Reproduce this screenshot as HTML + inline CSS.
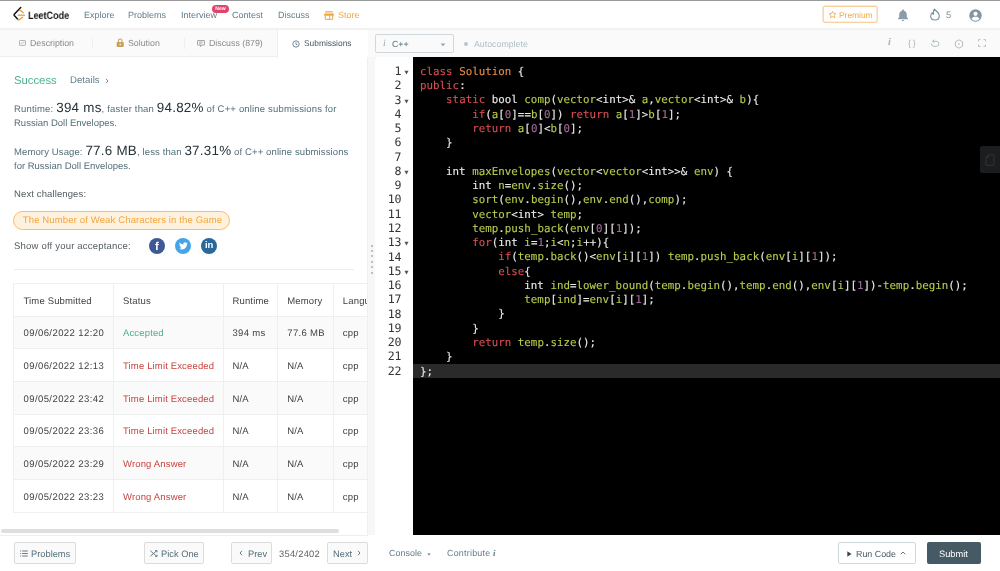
<!DOCTYPE html>
<html lang="en">
<head>
<meta charset="utf-8">
<title>Russian Doll Envelopes - LeetCode</title>
<style>
*{box-sizing:border-box;margin:0;padding:0}
html,body{width:1000px;height:571px;overflow:hidden;background:#fff}
body{position:relative;font-family:"Liberation Sans",sans-serif;font-size:9.3px;color:#424242;-webkit-font-smoothing:antialiased;text-rendering:geometricPrecision}
.abs{position:absolute;white-space:nowrap;will-change:transform}
#topline{left:0;top:0;width:1000px;height:1.200px;background:#999}
#header{left:0;top:1px;width:1000px;height:28px;background:#fff}
#hline{left:0;top:28px;width:1000px;height:1px;background:#e6e6e6;transform:translateY(0.500px);z-index:5}
.nav{top:9px;font-size:9px;color:#607d8b;line-height:12px}
#tabs{left:0;top:29px;width:367.500px;height:28px;background:#fafafa;border-bottom:1px solid #eeeeee}
.tab{top:37.200px;font-size:8.800px;color:#8a8a8a;line-height:12px}
#tabactive{left:276.5px;top:29px;width:91px;height:29px;background:#fff;border-left:1px solid #eeeeee}
#split{left:367px;top:57px;width:8.500px;height:479px;background:#f7f7f7;border-left:1px solid #efefef;border-right:1px solid #efefef}
#rtool{left:367.500px;top:29px;width:633px;height:28px;background:#fafafa}
#langsel{left:375px;top:34px;width:78.500px;height:18.500px;border:1px solid #cfd8dc;border-radius:2px;background:#fafafa}
#editor{left:375px;top:57px;width:625px;height:478px;background:#fff;border-radius:3px 0 0 0;overflow:hidden}
#code{left:38px;top:0;width:587px;height:478px;background:#000}
#activeline{left:38px;top:306.800px;width:587px;height:14.2px;background:#2a2a2a}
.ln{right:599.500px;width:30px;text-align:right;font-family:"DejaVu Sans Mono","Liberation Mono",monospace;font-size:11.600px;letter-spacing:-0.400px;line-height:14.27px;color:#333;height:14.27px}
.fold{left:29.300px;width:5px;height:5px}
.cl{-webkit-text-stroke:0.120px;left:44.700px;font-family:"DejaVu Sans Mono","Liberation Mono",monospace;font-size:10.8px;line-height:14.27px;height:14.27px;color:#eaeaea;white-space:pre;letter-spacing:0.02px}
.k{color:#d54e53}.t{color:#e78c45}.f{color:#b9ca4a}.n{color:#a16a94}.w{color:#f0f0f0}
#bottombar{left:0;top:535px;width:1000px;height:36px;background:#fff}
.btn{border:1px solid #dcdcdc;border-radius:2px;background:#fff;color:#546e7a;font-size:9.3px;line-height:12px;text-align:center}
table{border-collapse:collapse}
#tbl{left:13.300px;top:283px;width:354px;height:230px;overflow:hidden}
#tbl table{width:384px;font-size:9.500px;color:#424242;letter-spacing:0.15px;table-layout:fixed}
#tbl td,#tbl th{height:32.680px;border:1px solid #efefef;padding:2.400px 0 0 9.500px;text-align:left;font-weight:normal;white-space:nowrap}
#tbl tr.s td{background:#fafafa}
.dt{letter-spacing:0.420px}.nm{letter-spacing:0.340px}#tbl td:nth-child(2),#tbl th:nth-child(2){padding-left:9.300px}#tbl td:nth-child(3),#tbl th:nth-child(3){padding-left:8.600px}#tbl td:nth-child(4),#tbl th:nth-child(4){padding-left:9.100px}#tbl td:nth-child(5),#tbl th:nth-child(5){padding-left:9.100px}.ac{color:#4caf93}.er{color:#c7453f}
.pl{left:13.800px;font-size:9.500px;line-height:14px;height:14px;color:#546e7a;letter-spacing:0.12px}.big{font-size:13.400px;color:#263238;letter-spacing:0.250px;line-height:14px}
.bt{top:547.500px;font-size:9.300px;line-height:12px;color:#546e7a}
</style>
</head>
<body>
<div id="header" class="abs"></div>
<div id="hline" class="abs"></div>
<div id="topline" class="abs"></div>

<!-- logo -->
<svg class="abs" style="left:12px;top:6px" width="14" height="16" viewBox="0 0 14 16">
  <path d="M8.700 1.500 L2.300 8.200 Q1.700 8.900 2.300 9.600 L6 13.400" fill="none" stroke="#111" stroke-width="1.500" stroke-linecap="round" stroke-linejoin="round"/>
  <path d="M7.500 4.300 Q8.200 4.200 8.900 4.800 L11.200 6.700" fill="none" stroke="#f5a01f" stroke-width="1.400" stroke-linecap="round"/>
  <path d="M6 13.400 Q6.800 14 7.700 13.400 L10.700 11.300" fill="none" stroke="#f5a01f" stroke-width="1.400" stroke-linecap="round"/>
  <path d="M6.200 9.200 L12.500 9.200" fill="none" stroke="#b5b5b5" stroke-width="1.400" stroke-linecap="round"/>
</svg>
<div class="abs" style="left:28.300px;top:8.500px;font-size:10.600px;line-height:14px;font-weight:bold;color:#1a1a1a;transform:scaleX(0.850);transform-origin:0 0">LeetCode</div>

<div class="abs nav" style="left:84px">Explore</div>
<div class="abs nav" style="left:128px">Problems</div>
<div class="abs nav" style="left:180.5px">Interview</div>
<div class="abs" style="left:212px;top:4.5px;width:17px;height:8px;border-radius:4px;background:#e0436b;color:#fff;font-size:5px;line-height:8px;text-align:center;font-weight:bold">New</div>
<div class="abs nav" style="left:231.5px">Contest</div>
<div class="abs nav" style="left:277.5px">Discuss</div>
<svg class="abs" style="left:324.200px;top:10.500px" width="10" height="9" viewBox="0 0 10 9">
  <path d="M1.200 0.300h7.600v1h-7.600z" fill="#f0a53a"/>
  <path d="M1 1.600h8l0.800 1.500h-9.600z" fill="#f7cf94"/>
  <path d="M0.200 3.100h9.600v1.700h-9.600z" fill="#f0a53a"/>
  <path d="M1.300 4.800v3.500h7.400v-3.500" fill="none" stroke="#f0a53a" stroke-width="1"/>
  <path d="M5.600 5v3.300" stroke="#f0a53a" stroke-width="0.900"/>
</svg>
<div class="abs nav" style="left:338px;color:#f2a73b">Store</div>

<!-- right header -->
<div class="abs" style="left:823px;top:6px;width:55px;height:17px;border:1px solid #f6bf78;border-radius:2px;transform:translate(-0.400px,-0.300px)"></div>
<svg class="abs" style="left:827.600px;top:10.200px" width="9.200" height="9.200" viewBox="0 0 24 24"><path d="M12 3.5l2.6 5.6 6.1.8-4.5 4.2 1.2 6-5.4-3-5.4 3 1.2-6L3.3 9.900l6.100-.8z" fill="none" stroke="#f3a94a" stroke-width="2.300" stroke-linejoin="round"/></svg>
<div class="abs" style="left:839px;top:8.500px;font-size:8.500px;line-height:12px;color:#f3aa48;letter-spacing:-0.050px">Premium</div>
<svg class="abs" style="left:897px;top:8.500px" width="12" height="13" viewBox="0 0 12 13"><path d="M6 0.600c.6 0 1 .4 1 .9v.3c1.800.5 2.800 2 2.800 3.900v2.600l1.200 1.300v.6H1v-.6l1.200-1.300V5.700c0-1.900 1-3.400 2.800-3.900v-.3c0-.5.400-.9 1-.9z M4.800 11h2.400c0 .7-.5 1.200-1.200 1.200S4.800 11.700 4.800 11z" fill="#8b9ca8"/></svg>
<svg class="abs" style="left:928.500px;top:8.300px" width="12" height="13" viewBox="0 0 12 13"><path d="M5.300 1 C6.400 2.600 10.300 4.400 10.300 8 C10.300 10.400 8.400 12 6 12 C3.600 12 1.700 10.400 1.700 8 C1.700 6.500 2.500 5.400 3.200 4.600 C3.400 5.600 3.900 6.200 4.500 6.300 C4.100 4.300 4.400 2.300 5.300 1 Z" fill="none" stroke="#78909c" stroke-width="1.100" stroke-linejoin="round"/></svg>
<div class="abs" style="left:945.5px;top:8.500px;font-size:9.400px;line-height:12px;color:#78909c">5</div>
<svg class="abs" style="left:969px;top:8.500px" width="13" height="13" viewBox="0 0 13 13"><circle cx="6.500" cy="6.500" r="6.200" fill="#8496a3"/><circle cx="6.500" cy="4.800" r="2.100" fill="#fff"/><path d="M2.400 9.800c.8-1.500 2.400-2.100 4.100-2.100s3.300.6 4.100 2.100c-1 1.300-2.500 2-4.100 2s-3.100-.7-4.100-2z" fill="#fff"/></svg>

<!-- tabs -->
<div id="tabs" class="abs"></div>
<div id="tabactive" class="abs"></div>
<svg class="abs" style="left:19px;top:40.300px" width="7" height="6.200" viewBox="0 0 8 7"><rect x="0.500" y="0.500" width="7" height="5.600" rx="0.800" fill="none" stroke="#9e9e9e" stroke-width="0.900"/><path d="M1.800 4.500l1.300-1.400 1 .9 M4.800 2.500h1.600" stroke="#9e9e9e" stroke-width="0.800" fill="none"/></svg>
<div class="abs tab" style="left:30px">Description</div>
<div class="abs" style="left:92px;top:38px;width:1px;height:11px;background:#efefef"></div>
<svg class="abs" style="left:116.200px;top:38.200px" width="8.400" height="9.400" viewBox="0 0 8 9"><path d="M2.300 4V2.700a1.700 1.700 0 0 1 3.400 0V4" fill="none" stroke="#c9a25a" stroke-width="1"/><rect x="0.600" y="3.800" width="6.800" height="4.800" rx="0.700" fill="#c9a25a"/><rect x="3.500" y="5.400" width="1" height="1.600" fill="#fff"/></svg>
<div class="abs tab" style="left:128px">Solution</div>
<div class="abs" style="left:184px;top:38px;width:1px;height:11px;background:#efefef"></div>
<svg class="abs" style="left:197.200px;top:39.800px" width="8" height="7.200" viewBox="0 0 9 8"><path d="M1 0.600h7a.5.5 0 0 1 .5.500v4a.5.500 0 0 1-.5.500H5.200L4 7.200V5.600H1a.5.500 0 0 1-.5-.5v-4a.5.500 0 0 1 .5-.5z" fill="none" stroke="#8a8a8a" stroke-width="0.900"/><path d="M2.200 2.300h4.600M2.200 3.700h3.200" stroke="#8a8a8a" stroke-width="0.700"/></svg>
<div class="abs tab" style="left:209px">Discuss (879)</div>
<svg class="abs" style="left:292.300px;top:39.600px" width="8" height="8" viewBox="0 0 9 9"><circle cx="4.500" cy="4.500" r="3.600" fill="none" stroke="#546e7a" stroke-width="0.900"/><path d="M4.500 2.400v2.300l1.500 1" fill="none" stroke="#546e7a" stroke-width="0.900"/></svg>
<div class="abs tab" style="left:304px;color:#455a64;font-size:8.400px">Submissions</div>

<!-- left content -->
<div class="abs" style="left:13.5px;top:72.500px;font-size:11.300px;line-height:16px;color:#4caf93">Success</div>
<div class="abs" style="left:69.700px;top:74.500px;font-size:9.600px;line-height:12px;color:#607d8b;letter-spacing:0.05px">Details</div>
<svg class="abs" style="left:104.500px;top:77.800px" width="4" height="6" viewBox="0 0 4 6"><path d="M1 0.800L3 3 1 5.200" fill="none" stroke="#607d8b" stroke-width="0.900"/></svg>

<div class="abs pl" style="top:101.100px;letter-spacing:0.170px">Runtime: <span class="big">394 ms</span>, faster than <span class="big">94.82%</span> of C++ online submissions for</div>
<div class="abs pl" style="top:117.400px;letter-spacing:0">Russian Doll Envelopes.</div>
<div class="abs pl" style="top:143.600px">Memory Usage: <span class="big">77.6 MB</span>, less than <span class="big">37.31%</span> of C++ online submissions</div>
<div class="abs pl" style="top:159.900px;letter-spacing:0">for Russian Doll Envelopes.</div>
<div class="abs" style="left:13.800px;top:188.500px;font-size:9.500px;line-height:12px;color:#555b5f;letter-spacing:0.12px">Next challenges:</div>
<div class="abs" style="left:13.200px;top:211px;width:217.200px;height:19px;border:1px solid #f7bd6b;border-radius:9.500px;background:#fef1de;color:#f3a53f;font-size:9.500px;letter-spacing:0.14px;line-height:17px;padding-left:8.800px">The Number of Weak Characters in the Game</div>
<div class="abs" style="left:13.800px;top:241.200px;font-size:9.500px;line-height:12px;color:#555b5f;letter-spacing:0.2px">Show off your acceptance:</div>
<div class="abs" style="left:149px;top:238px;width:16px;height:16px;border-radius:8px;background:#3f5896;color:#fff;font-size:11.500px;line-height:18px;text-align:center;font-weight:bold">f</div>
<div class="abs" style="left:175px;top:238px;width:16px;height:16px;border-radius:8px;background:#45a5e8"></div>
<svg class="abs" style="left:178.500px;top:242px" width="9" height="8" viewBox="0 0 24 20"><path d="M23.600 2.400c-.9.400-1.800.7-2.800.8 1-.6 1.800-1.600 2.100-2.700-.9.600-2 1-3.100 1.200C18.900.7 17.700.1 16.300.1c-2.700 0-4.800 2.200-4.800 4.800 0 .4 0 .8.100 1.100C7.600 5.800 4.100 3.900 1.700.9c-.4.700-.6 1.600-.6 2.400 0 1.700.8 3.100 2.100 4-.8 0-1.500-.2-2.200-.6v.1c0 2.300 1.700 4.300 3.900 4.700-.4.100-.8.200-1.300.2-.3 0-.6 0-.9-.1.600 1.900 2.400 3.300 4.500 3.400-1.600 1.300-3.700 2.100-6 2.100-.4 0-.8 0-1.100-.1 2.100 1.400 4.600 2.200 7.400 2.200 8.800 0 13.700-7.300 13.700-13.700v-.6c.9-.7 1.700-1.500 2.400-2.500z" fill="#fff"/></svg>
<div class="abs" style="left:201px;top:238px;width:16px;height:16px;border-radius:8px;background:#28689a;color:#fff;font-size:9.500px;line-height:15.500px;text-align:center;font-weight:bold;letter-spacing:-0.3px">in</div>
<div class="abs" style="left:14px;top:269px;width:340px;height:1px;background:#eeeeee"></div>

<!-- table -->
<div id="tbl" class="abs">
<table>
<tr><th style="width:99.700px">Time Submitted</th><th style="width:110.200px">Status</th><th style="width:54.300px">Runtime</th><th style="width:55.600px">Memory</th><th>Language</th></tr>
<tr class="s"><td class="dt">09/06/2022 12:20</td><td class="ac">Accepted</td><td class="nm">394 ms</td><td class="nm">77.6 MB</td><td>cpp</td></tr>
<tr><td class="dt">09/06/2022 12:13</td><td class="er">Time Limit Exceeded</td><td>N/A</td><td>N/A</td><td>cpp</td></tr>
<tr class="s"><td class="dt">09/05/2022 23:42</td><td class="er">Time Limit Exceeded</td><td>N/A</td><td>N/A</td><td>cpp</td></tr>
<tr><td class="dt">09/05/2022 23:36</td><td class="er">Time Limit Exceeded</td><td>N/A</td><td>N/A</td><td>cpp</td></tr>
<tr class="s"><td class="dt">09/05/2022 23:29</td><td class="er">Wrong Answer</td><td>N/A</td><td>N/A</td><td>cpp</td></tr>
<tr><td class="dt">09/05/2022 23:23</td><td class="er">Wrong Answer</td><td>N/A</td><td>N/A</td><td>cpp</td></tr>
</table>
</div>
<div class="abs" style="left:1px;top:529px;width:338px;height:4.400px;background:#dedede;border-radius:2px"></div>

<!-- splitter -->
<div id="split" class="abs"></div>
<div id="rtool" class="abs"></div>
<div class="abs" style="left:370.600px;top:244.50px;width:1.600px;height:1.600px;border-radius:1px;background:#9fb0bb"></div>
<div class="abs" style="left:370.600px;top:249.93px;width:1.600px;height:1.600px;border-radius:1px;background:#9fb0bb"></div>
<div class="abs" style="left:370.600px;top:255.36px;width:1.600px;height:1.600px;border-radius:1px;background:#9fb0bb"></div>
<div class="abs" style="left:370.600px;top:260.79px;width:1.600px;height:1.600px;border-radius:1px;background:#9fb0bb"></div>
<div class="abs" style="left:370.600px;top:266.22px;width:1.600px;height:1.600px;border-radius:1px;background:#9fb0bb"></div>
<div class="abs" style="left:370.600px;top:271.65px;width:1.600px;height:1.600px;border-radius:1px;background:#9fb0bb"></div>

<div id="langsel" class="abs"></div>
<div class="abs" style="left:382.500px;top:38px;font-family:'Liberation Serif',serif;font-style:italic;font-size:9.500px;line-height:12px;color:#90a4ae">i</div>
<div class="abs" style="left:391.800px;top:37.500px;font-size:8.800px;line-height:12px;color:#546e7a">C++</div>
<svg class="abs" style="left:439.500px;top:42.500px" width="6" height="4" viewBox="0 0 6 4"><path d="M0.600 0.600h4.800L3 3.200z" fill="#90a4ae"/></svg>
<div class="abs" style="left:464px;top:41.500px;width:4px;height:4px;border-radius:2px;background:#b8c4ca"></div>
<div class="abs" style="left:473.700px;top:37.500px;font-size:8.800px;line-height:12px;color:#b0bec5">Autocomplete</div>
<div class="abs" style="left:887.800px;top:37px;font-family:'Liberation Serif',serif;font-style:italic;font-weight:bold;font-size:10.500px;line-height:12px;color:#a3b3bc">i</div>
<div class="abs" style="left:907.800px;top:37px;font-size:8.800px;line-height:12px;color:#a3b3bc;letter-spacing:1.800px">{}</div>
<svg class="abs" style="left:930.300px;top:39px" width="10" height="9" viewBox="0 0 10 9"><path d="M3 2.300H6.400A2.500 2.500 0 0 1 6.400 7.300H3.800A2.500 2.500 0 0 1 1.300 4.900" fill="none" stroke="#a7b5bc" stroke-width="0.900" stroke-linecap="round"/><path d="M4.100 0.900L2.600 2.300l1.500 1.300" fill="none" stroke="#a7b5bc" stroke-width="0.900" stroke-linecap="round"/></svg>
<svg class="abs" style="left:953.500px;top:38.500px" width="10" height="10" viewBox="0 0 10 10"><path d="M5 0.800l3.600 2.100v4.200L5 9.200 1.400 7.100V2.900z" fill="none" stroke="#a7b5bc" stroke-width="0.900" stroke-linejoin="round"/><circle cx="5" cy="5" r="0.800" fill="#a7b5bc"/></svg>
<svg class="abs" style="left:977.800px;top:39.300px" width="8" height="8" viewBox="0 0 9 9"><path d="M0.600 2.800V0.600h2.200M6.200 0.600h2.200v2.200M8.400 6.200v2.200H6.200M2.800 8.400H0.600V6.200" fill="none" stroke="#a7b5bc" stroke-width="0.900"/></svg>

<!-- editor -->
<div id="editor" class="abs">
<div id="code" class="abs"></div>
<div id="activeline" class="abs"></div>
<div class="abs" style="left:605px;top:89.300px;width:20px;height:26.600px;background:#1c1d1f;border-radius:2px 0 0 2px"></div>
<svg class="abs" style="left:609.500px;top:96.500px" width="10" height="12" viewBox="0 0 10 12"><path d="M3.500 0.800h5.500v10.400H1V3.300z" fill="none" stroke="#353638" stroke-width="0.900" stroke-linejoin="round"/><path d="M3.500 0.800v2.500H1" fill="none" stroke="#353638" stroke-width="0.900"/></svg>
<div id="lines">
<div class="abs ln" style="top:7.00px">1</div>
<svg class="abs fold" style="top:13.10px" viewBox="0 0 5 5"><path d="M0.4 0.8h4.2L2.5 4.4z" fill="#555"/></svg>
<div class="abs cl" style="top:7.90px"><span class="k">class</span> <span class="t">Solution</span> {</div>
<div class="abs ln" style="top:21.27px">2</div>
<div class="abs cl" style="top:22.17px"><span class="k">public</span>:</div>
<div class="abs ln" style="top:35.54px">3</div>
<svg class="abs fold" style="top:41.64px" viewBox="0 0 5 5"><path d="M0.4 0.8h4.2L2.5 4.4z" fill="#555"/></svg>
<div class="abs cl" style="top:36.44px">    <span class="k">static</span> bool <span class="f">comp</span>(<span class="f">vector</span>&lt;int&gt;&amp; <span class="f">a</span>,<span class="f">vector</span>&lt;int&gt;&amp; <span class="f">b</span>){</div>
<div class="abs ln" style="top:49.81px">4</div>
<div class="abs cl" style="top:50.71px">        <span class="k">if</span>(<span class="f">a</span>[<span class="n">0</span>]==<span class="f">b</span>[<span class="n">0</span>]) <span class="k">return</span> <span class="f">a</span>[<span class="n">1</span>]&gt;<span class="f">b</span>[<span class="n">1</span>];</div>
<div class="abs ln" style="top:64.08px">5</div>
<div class="abs cl" style="top:64.98px">        <span class="k">return</span> <span class="f">a</span>[<span class="n">0</span>]&lt;<span class="f">b</span>[<span class="n">0</span>];</div>
<div class="abs ln" style="top:78.35px">6</div>
<div class="abs cl" style="top:79.25px">    }</div>
<div class="abs ln" style="top:92.62px">7</div>
<div class="abs cl" style="top:93.52px">    </div>
<div class="abs ln" style="top:106.89px">8</div>
<svg class="abs fold" style="top:112.99px" viewBox="0 0 5 5"><path d="M0.4 0.8h4.2L2.5 4.4z" fill="#555"/></svg>
<div class="abs cl" style="top:107.79px">    int <span class="f">maxEnvelopes</span>(<span class="f">vector</span>&lt;<span class="f">vector</span>&lt;int&gt;&gt;&amp; <span class="f">env</span>) {</div>
<div class="abs ln" style="top:121.16px">9</div>
<div class="abs cl" style="top:122.06px">        int <span class="f">n</span>=<span class="f">env</span>.<span class="f">size</span>();</div>
<div class="abs ln" style="top:135.43px">10</div>
<div class="abs cl" style="top:136.33px">        <span class="f">sort</span>(<span class="f">env</span>.<span class="f">begin</span>(),<span class="f">env</span>.<span class="f">end</span>(),<span class="f">comp</span>);</div>
<div class="abs ln" style="top:149.70px">11</div>
<div class="abs cl" style="top:150.60px">        <span class="f">vector</span>&lt;int&gt; <span class="f">temp</span>;</div>
<div class="abs ln" style="top:163.97px">12</div>
<div class="abs cl" style="top:164.87px">        <span class="f">temp</span>.<span class="f">push_back</span>(<span class="f">env</span>[<span class="n">0</span>][<span class="n">1</span>]);</div>
<div class="abs ln" style="top:178.24px">13</div>
<svg class="abs fold" style="top:184.34px" viewBox="0 0 5 5"><path d="M0.4 0.8h4.2L2.5 4.4z" fill="#555"/></svg>
<div class="abs cl" style="top:179.14px">        <span class="k">for</span>(int <span class="f">i</span>=<span class="n">1</span>;<span class="f">i</span>&lt;<span class="f">n</span>;<span class="f">i</span>++){</div>
<div class="abs ln" style="top:192.51px">14</div>
<div class="abs cl" style="top:193.41px">            <span class="k">if</span>(<span class="f">temp</span>.<span class="f">back</span>()&lt;<span class="f">env</span>[<span class="f">i</span>][<span class="n">1</span>]) <span class="f">temp</span>.<span class="f">push_back</span>(<span class="f">env</span>[<span class="f">i</span>][<span class="n">1</span>]);</div>
<div class="abs ln" style="top:206.78px">15</div>
<svg class="abs fold" style="top:212.88px" viewBox="0 0 5 5"><path d="M0.4 0.8h4.2L2.5 4.4z" fill="#555"/></svg>
<div class="abs cl" style="top:207.68px">            <span class="k">else</span>{</div>
<div class="abs ln" style="top:221.05px">16</div>
<div class="abs cl" style="top:221.95px">                int <span class="f">ind</span>=<span class="f">lower_bound</span>(<span class="f">temp</span>.<span class="f">begin</span>(),<span class="f">temp</span>.<span class="f">end</span>(),<span class="f">env</span>[<span class="f">i</span>][<span class="n">1</span>])-<span class="f">temp</span>.<span class="f">begin</span>();</div>
<div class="abs ln" style="top:235.32px">17</div>
<div class="abs cl" style="top:236.22px">                <span class="f">temp</span>[<span class="f">ind</span>]=<span class="f">env</span>[<span class="f">i</span>][<span class="n">1</span>];</div>
<div class="abs ln" style="top:249.59px">18</div>
<div class="abs cl" style="top:250.49px">            }</div>
<div class="abs ln" style="top:263.86px">19</div>
<div class="abs cl" style="top:264.76px">        }</div>
<div class="abs ln" style="top:278.13px">20</div>
<div class="abs cl" style="top:279.03px">        <span class="k">return</span> <span class="f">temp</span>.<span class="f">size</span>();</div>
<div class="abs ln" style="top:292.40px">21</div>
<div class="abs cl" style="top:293.30px">    }</div>
<div class="abs ln" style="top:306.67px">22</div>
<div class="abs cl" style="top:307.57px">};</div>
</div>
</div>

<div id="bottombar" class="abs"></div>
<div class="abs" style="left:0;top:535px;width:367.500px;height:1px;background:#eeeeee"></div>
<div class="abs btn" style="left:14px;top:542px;width:61.500px;height:22px;background:#fafafa"></div>
<svg class="abs" style="left:20px;top:549.500px" width="8" height="7" viewBox="0 0 8 7"><path d="M0.200 1h1M0.200 3.500h1M0.200 6h1M2.200 1h5.600M2.200 3.500h5.600M2.200 6h5.600" stroke="#546e7a" stroke-width="0.900"/></svg>
<div class="abs bt" style="left:30.800px">Problems</div>
<div class="abs btn" style="left:144px;top:542px;width:60px;height:22px;background:#fafafa"></div>
<svg class="abs" style="left:150px;top:549.500px" width="8" height="7" viewBox="0 0 8 7"><path d="M0.400 0.800L6.600 6.200M0.400 6.200L6.600 0.800" stroke="#546e7a" stroke-width="0.900" fill="none"/><path d="M5.200 0.600h1.800v1.700M5.200 6.400h1.800V4.700" stroke="#546e7a" stroke-width="0.900" fill="none"/></svg>
<div class="abs bt" style="left:161px">Pick One</div>
<div class="abs btn" style="left:231px;top:542px;width:41px;height:22px;background:#fafafa"></div>
<svg class="abs" style="left:239px;top:550px" width="4" height="6" viewBox="0 0 4 6"><path d="M3 0.800L1 3l2 2.200" fill="none" stroke="#546e7a" stroke-width="0.900"/></svg>
<div class="abs bt" style="left:247.500px">Prev</div>
<div class="abs bt" style="left:278.500px;color:#616161;letter-spacing:0.280px">354/2402</div>
<div class="abs btn" style="left:327px;top:542px;width:41px;height:22px;background:#fafafa"></div>
<div class="abs bt" style="left:332.500px">Next</div>
<svg class="abs" style="left:356.500px;top:550px" width="4" height="6" viewBox="0 0 4 6"><path d="M1 0.800L3 3 1 5.200" fill="none" stroke="#546e7a" stroke-width="0.900"/></svg>
<div class="abs" style="left:388.600px;top:547px;font-size:8.900px;line-height:12px;color:#607d8b;letter-spacing:0.080px">Console</div>
<svg class="abs" style="left:427px;top:552.500px" width="4" height="3" viewBox="0 0 4 3"><path d="M0.300 0.400h3.400L2 2.400z" fill="#607d8b"/></svg>
<div class="abs" style="left:447px;top:547px;font-size:8.900px;line-height:12px;color:#607d8b;letter-spacing:0.250px">Contribute</div>
<div class="abs" style="left:492.800px;top:547px;font-family:'Liberation Serif',serif;font-style:italic;font-weight:bold;font-size:9px;line-height:12px;color:#607d8b">i</div>
<div class="abs btn" style="left:838px;top:542px;width:78px;height:22px;background:#fff;border-color:#cfd8dc"></div>
<svg class="abs" style="left:847px;top:550.500px" width="5" height="6" viewBox="0 0 5 6"><path d="M0.300 0.300L4.600 3 0.300 5.700z" fill="#37474f"/></svg>
<div class="abs bt" style="left:855.500px;color:#455a64;font-size:8.900px">Run Code</div>
<svg class="abs" style="left:899.500px;top:551px" width="6" height="4" viewBox="0 0 6 4"><path d="M0.800 3.200L3 1l2.200 2.200" fill="none" stroke="#546e7a" stroke-width="0.900"/></svg>
<div class="abs" style="left:927px;top:542px;width:54px;height:22px;background:#455a64;border-radius:2px"></div>
<div class="abs bt" style="left:939px;color:#fff">Submit</div>
</body>
</html>
